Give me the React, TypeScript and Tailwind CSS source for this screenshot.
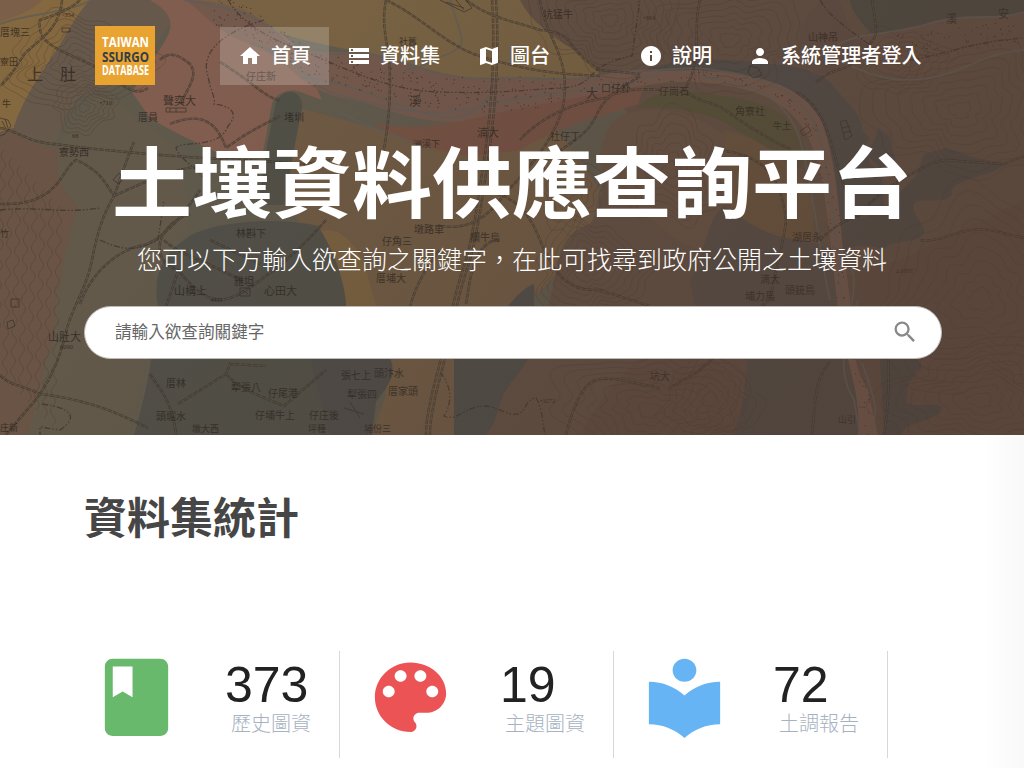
import React from "react";
import { MdHome, MdStorage, MdMap, MdInfo, MdPerson, MdSearch } from "react-icons/md";

type Pt = [number, number];

const REGIONS: { d: string; fill: string }[] = [
  // western hills and plain
  { d: "M0 0H90C72 20 66 38 50 60C36 82 24 98 14 128L0 132Z", fill: "#84683f" },
  { d: "M0 0H42C30 12 16 16 0 22Z", fill: "#7b5f49" },
  { d: "M90 0H180L172 22C160 34 158 46 146 58C128 70 130 84 110 88C80 90 70 104 62 124C56 140 60 146 40 142C24 140 16 132 14 126C24 98 36 82 50 60C66 38 72 20 90 0Z", fill: "#66594b" },
  { d: "M0 132L14 128C22 140 40 146 58 148C54 170 60 190 78 206C70 230 66 250 60 280C52 310 60 330 46 360C40 386 34 410 28 435H0Z", fill: "#695445" },
  { d: "M58 148C54 170 60 190 78 206C70 230 66 250 60 280C52 310 60 330 46 360L28 435H130C140 390 152 340 156 300C150 270 170 250 190 230L180 150L100 90Z", fill: "#62594a" },
  { d: "M150 0H200C240 8 270 22 300 50L322 100L300 92C290 88 276 92 272 104C268 124 266 140 262 156L216 152C196 142 172 132 150 118L132 92L158 52C170 34 182 18 150 0Z", fill: "#805d4e" },
  // yellow plain
  { d: "M195 0H620L640 80L500 84C440 88 410 60 350 50C300 40 260 30 195 0Z", fill: "#786243" },
  { d: "M300 108L380 130L560 134L600 190L585 250L530 300L500 360L458 435H372C380 410 392 388 384 372L350 300C346 280 342 256 330 240L298 222L288 150Z", fill: "#6e5a43" },
  { d: "M318 232C340 226 352 240 364 262L376 306H346C340 270 336 250 318 232Z", fill: "#78603f" },
  // middle hills
  { d: "M520 0H760L1024 0V435H480L500 382L546 310C560 280 550 236 590 224C610 200 590 160 640 130L600 76C590 50 540 40 520 0Z", fill: "#624f43" },
  { d: "M580 435C620 360 700 300 760 300L900 260L1024 200V435Z", fill: "#5f4b40" },
  { d: "M640 210C600 190 590 160 612 122C640 100 690 110 724 134C736 170 728 220 700 250C670 240 660 224 640 210Z", fill: "#655244" },
  { d: "M724 130C770 140 800 170 812 200C820 260 790 306 772 316C756 270 740 230 728 200Z", fill: "#69533d" },
  // slate lowlands
  { d: "M187 238C208 222 276 216 318 226C334 250 346 286 346 306V435H134C146 396 154 350 158 306C152 270 166 252 187 238Z", fill: "#504f47" },
  { d: "M276 102C284 86 304 90 302 108L292 160L284 205H260C260 180 268 140 276 102Z", fill: "#504f46" },
  { d: "M310 358H390C398 376 386 388 376 402L372 435H330Z", fill: "#4d4b47" },
  { d: "M505 310C516 296 524 288 534 284C536 310 530 340 528 358C520 376 504 386 500 404C496 420 490 430 486 435H454V358L470 318Z", fill: "#4e4c48" },
  { d: "M850 0H1024V16C990 22 960 10 926 38C900 42 886 36 874 36C860 22 852 12 850 0Z", fill: "#4d4a41" },
  { d: "M638 108C650 88 690 90 720 96C760 100 782 110 794 128C810 150 806 160 800 168C772 148 742 134 724 122C700 112 670 106 638 108Z", fill: "#565039" },
  { d: "M640 72C680 56 720 58 770 64C800 66 826 72 838 92C852 106 864 120 862 130L870 138L862 150L880 168L896 164L890 136L878 128C876 144 864 150 870 164L882 172L884 204L862 216L838 262C830 220 826 180 818 150C806 110 786 90 756 80C710 70 680 72 640 72Z", fill: "#504b47" },
  { d: "M884 208L916 176L924 154L946 148L976 158L1008 164L992 172C960 182 950 186 952 194C946 206 920 196 914 204C910 216 926 222 924 234C912 246 890 238 884 250C860 240 842 248 836 262L846 226Z", fill: "#504a44" },
  { d: "M690 280C710 240 706 220 724 206C744 220 768 238 800 240L838 250L836 310L850 358H744C720 362 700 340 690 280Z", fill: "#554c45" },
  { d: "M748 358H852L860 435H732L742 408Z", fill: "#514a44" },
  { d: "M880 358H916L922 366L908 384L906 402C916 410 936 400 942 408C940 420 916 420 906 428L900 435H884Z", fill: "#4c4743" },
  // riverbed
  { d: "M186 0C230 0 262 14 286 42C316 60 350 46 380 56C420 64 440 78 490 78C540 76 580 84 616 72L696 70C760 74 802 84 822 122C840 174 838 220 846 270C856 330 848 360 868 390L878 435H858C862 390 844 360 838 310C830 240 826 180 812 146C798 108 764 86 696 82C650 80 620 92 560 104C520 112 490 124 450 122C400 120 380 104 342 98C300 90 292 60 250 44C220 34 206 16 186 0Z", fill: "#73584c" },
  { d: "M374 124C410 130 450 126 500 112L596 94L644 86L638 104C606 116 562 124 520 150L470 156C430 150 396 140 374 124Z", fill: "#745143" },
  { d: "M838 44C870 30 900 34 934 22C976 12 990 22 1024 12V50C984 54 970 66 940 76C900 84 870 66 838 44Z", fill: "#654f44" },
  { d: "M814 72C790 40 800 20 822 0H838C850 18 846 38 870 46C850 60 840 76 814 72Z", fill: "#5e4b41" },
];

const STREAMS = [
  "M0 24C30 12 60 16 92 0M184 0C230 8 262 14 286 42C316 66 350 46 380 56C420 64 440 82 490 78C540 76 580 84 616 72",
  "M250 44C300 54 310 90 342 96C400 112 440 120 490 104C540 92 600 92 660 74M300 78C340 78 380 100 420 112S470 116 490 96",
  "M340 112C370 130 400 136 412 142M450 0C462 40 470 44 448 54C430 60 420 70 404 70",
  "M616 72L696 68C760 74 800 88 818 130C832 180 834 230 842 300C848 350 836 370 854 400L860 435",
  "M700 78C750 80 786 96 800 140C814 190 820 260 830 300",
  "M838 44C870 30 900 34 934 22C976 12 990 22 1024 12M838 60C880 80 900 84 940 76C974 66 984 54 1024 50",
  "M870 435C880 410 874 400 868 380S846 330 858 300M838 250C854 260 858 280 850 310",
];

const ROADS = [
  "M62 0C60 24 46 36 26 52C20 60 10 78 0 86",
  "M80 0C70 10 52 16 40 20C36 44 60 50 90 64S130 100 148 88",
  "M0 128C20 132 28 142 54 144C100 150 160 156 240 160S290 166 330 160",
  "M0 204C60 206 60 170 76 160C100 170 106 184 114 196C100 220 96 240 92 260C86 290 70 310 64 340C56 370 46 384 40 394",
  "M114 196C140 184 170 170 200 166M114 196C120 180 130 150 134 142",
  "M0 375C10 386 20 384 40 394C90 400 120 414 148 428",
  "M40 394C28 410 14 424 6 435M146 358C150 346 170 300 178 270C150 262 154 226 190 214",
  "M80 304C92 270 120 250 140 246S180 220 200 190M160 60C170 50 180 56 190 64C200 78 184 90 182 104",
  "M170 124C200 112 216 120 226 148C250 130 270 122 280 116M220 62C250 80 268 100 280 100",
  "M164 240C180 256 210 262 244 282M210 240L260 264M326 220C300 250 276 270 246 290S200 296 178 270",
  "M150 374C160 390 172 400 176 435M178 404L226 374L230 364L266 366M226 374C240 390 270 400 284 406L326 370",
  "M496 0C500 60 494 120 488 160S478 230 470 260C456 300 450 340 442 370S430 420 430 435",
  "M492 0C496 60 490 120 484 160S474 230 466 260C452 300 446 340 438 370S426 420 426 435",
  "M540 0C546 40 574 60 562 110C550 150 516 180 500 200S466 230 440 226",
  "M386 0C380 30 390 44 390 80S386 140 380 170",
  "M386 0C420 16 450 48 480 56C530 72 560 74 600 76M466 0C490 18 510 20 540 30C580 34 560 46 600 70L640 74",
  "M640 76C620 90 606 94 596 116S566 144 542 164M660 90C640 88 620 90 606 98C560 104 530 128 520 140",
  "M700 0C692 30 704 60 684 90C700 104 712 100 728 112S770 140 792 150",
  "M872 0C876 30 880 34 868 46M816 82C834 68 840 72 852 64",
  "M796 92C820 104 828 130 836 160S850 200 858 216C880 190 900 180 930 164L944 160L1004 164L1024 156",
  "M720 150C760 156 780 170 786 220C784 240 780 250 770 300M770 300C740 320 720 360 690 376L670 388",
  "M830 362C814 380 816 400 812 435M886 318C890 350 890 400 884 435",
  "M920 240C940 244 960 226 990 230L1024 238M820 240C840 220 860 214 884 206",
  "M470 180C500 200 520 190 540 240S580 290 600 290L650 306",
  "M410 308C414 288 430 260 440 250M466 304C470 280 474 240 500 240",
  "M566 435C572 410 582 384 596 380S630 382 660 388",
];

const RAIL = [
  "M228 0C240 20 262 36 300 50S380 90 440 92S520 90 560 88S580 66 632 56L640 0",
  "M264 20C210 36 202 60 208 76C210 90 216 98 214 104C230 106 240 112 228 126C220 150 180 140 176 148C180 160 196 166 210 186",
  "M820 0C830 18 850 30 874 48M910 60C940 56 970 42 1024 38",
  "M100 240C120 250 136 252 158 240L164 200M42 404C70 408 80 416 60 430L40 427V435",
  "M440 372C450 384 454 400 444 416C460 424 470 396 500 410S520 400 536 398C544 410 542 430 546 435",
  "M0 210C40 206 60 214 100 208",
];

const LABELS: [number, number, number, string][] = [
  [0, 36, 10, "厝塊三"], [27, 80, 16, "上"], [60, 80, 16, "肚"], [0, 65, 9, "寮田"], [2, 107, 9, "牛"],
  [246, 80, 10, "仔庄新"], [163, 105, 11, "聲奕大"], [138, 121, 10, "厝員"], [284, 121, 10, "堵圳"],
  [59, 156, 10, "寮勢西"], [399, 45, 9, "社舊"], [543, 18, 10, "坑猛牛"],
  [409, 106, 12, "溪"], [477, 137, 11, "湳大"], [413, 147, 9, "洲溪下"],
  [550, 140, 10, "社仔丁"], [586, 98, 12, "大"], [601, 92, 10, "口仔朴"], [659, 95, 10, "仔崗石"],
  [735, 115, 10, "角寮社"], [773, 129, 9, "牛土"], [808, 41, 10, "山神吊"], [946, 23, 11, "溪"],
  [998, 18, 11, "安"], [236, 237, 10, "林斟下"], [174, 295, 11, "山構上"],
  [264, 295, 11, "心田大"], [234, 285, 10, "雅坦"], [48, 341, 11, "山肚大"],
  [0, 237, 9, "竹"], [414, 233, 10, "墩路車"], [382, 245, 10, "仔角三"], [470, 241, 10, "欄牛烏"],
  [376, 282, 10, "厝埔大"], [166, 387, 10, "厝林"], [231, 391, 10, "犁張八"],
  [268, 397, 10, "仔尾港"], [156, 420, 10, "頭堀水"], [255, 419, 10, "仔埔牛上"], [309, 419, 10, "仔庄後"],
  [0, 431, 9, "庄新"], [341, 379, 10, "張七上"], [374, 377, 10, "頭汴水"], [347, 398, 10, "犁張四"],
  [388, 395, 10, "厝家頭"], [650, 380, 10, "坑大"], [792, 241, 10, "湖居永"], [760, 283, 10, "湳大"],
  [785, 294, 10, "頭銃鳥"], [745, 300, 10, "埔力馬"], [838, 423, 9, "山引"], [364, 432, 9, "埔份三"],
  [192, 432, 9, "墩大西"], [308, 432, 9, "坪種"],
];

const ELEVATIONS: [number, number, string][] = [
  [62, 17, "▫354"], [100, 105, "•710"], [643, 20, "•384"], [72, 138, "68"],
  [896, 273, "▵1857"], [540, 403, "•3272"], [60, 349, "6090"], [210, 302, "4491"],
];

const CENTERS: [number, number, number, number, number][] = [
  [78, 62, 8, 5, 9], [84, 108, 5, 4, 6], [610, 20, 8, 6, 9], [670, 170, 7, 8, 7], [590, 270, 7, 6, 8],
  [650, 410, 12, 7, 8], [960, 110, 11, 8, 8], [980, 300, 12, 11, 9], [900, 60, 8, 5, 6],
  [730, 40, 10, 7, 7], [980, 400, 12, 7, 8], [710, 400, 8, 7, 6], [570, 190, 6, 8, 5],
];

function contour(cx: number, cy: number, rx: number, ry: number, seed: number): string {
  const points: string[] = [];
  for (let i = 0; i <= 64; i++) {
    const t = (i / 64) * Math.PI * 2;
    const k = 1 + 0.14 * Math.sin(3 * t + seed) + 0.08 * Math.sin(7 * t + seed * 2) + 0.05 * Math.cos(11 * t + seed);
    points.push(`${(cx + rx * k * Math.cos(t)).toFixed(1)} ${(cy + ry * k * Math.sin(t)).toFixed(1)}`);
  }
  return `M${points.join("L")}Z`;
}

const CONTOURS = CENTERS.flatMap(([cx, cy, sx, sy, n], c) =>
  Array.from({ length: n }, (_, i) => contour(cx, cy, sx * (i + 1), sy * (i + 1), c * 1.7 + i * 0.12)),
);

const RIVER_LINE: Pt[] = [
  [215, 8], [265, 32], [310, 68], [370, 78], [430, 92], [490, 96], [560, 90], [630, 80], [700, 75],
  [770, 88], [808, 118], [826, 180], [836, 240], [846, 310], [860, 380], [868, 432],
];

function scatter(): Pt[] {
  const out: Pt[] = [];
  let s = 17;
  const rnd = () => {
    s = (s * 16807) % 2147483647;
    return s / 2147483647;
  };
  for (let i = 0; i < RIVER_LINE.length - 1; i++) {
    const [a, b] = [RIVER_LINE[i], RIVER_LINE[i + 1]];
    const wide = i < 6;
    for (let j = 0; j < (wide ? 42 : 14); j++) {
      const t = rnd();
      const vertical = i > 9;
      out.push([
        a[0] + (b[0] - a[0]) * t + (rnd() - 0.5) * (vertical ? 14 : 4),
        a[1] + (b[1] - a[1]) * t + (rnd() - 0.5) * (wide ? 34 : 10),
      ]);
    }
  }
  for (let j = 0; j < 70; j++) {
    const t = rnd();
    out.push([870 + t * 150, 50 - t * 18 + (rnd() - 0.5) * 24]);
  }
  return out;
}
const SAND = scatter();

const WAVES = Array.from({ length: 8 }, (_, i) => {
  let d = `M${4 + i * 8} ${150 + i * 8}`;
  for (let y = 0; y < 22; y++) d += `q${y % 2 ? 5 : -5} 5 ${y % 3 === 0 ? -1 : 0} 10`;
  return d;
});

function HistoricMap() {
  return (
    <svg className="absolute inset-0 h-full w-full" viewBox="0 0 1024 435" preserveAspectRatio="none" aria-hidden="true">
      <defs>
        <linearGradient id="shade" x1="0" y1="0" x2="1" y2="0.35">
          <stop offset="0.3" stopColor="#503d33" stopOpacity="0" />
          <stop offset="1" stopColor="#503d33" stopOpacity="0.4" />
        </linearGradient>
      </defs>
      <rect width="1024" height="435" fill="#5f594c" />
      {REGIONS.map((r, i) => (
        <path key={i} d={r.d} fill={r.fill} />
      ))}
      <g fill="none" stroke="#493229" strokeWidth="0.8" opacity="0.36">
        {CONTOURS.map((d, i) => (
          <path key={i} d={d} />
        ))}
        {WAVES.map((d, i) => (
          <path key={i} d={d} />
        ))}
      </g>
      <g fill="none" stroke="#605e57" strokeWidth="1.8" opacity="0.8">
        {STREAMS.map((d, i) => (
          <path key={i} d={d} />
        ))}
      </g>
      <g fill="#32261f" opacity="0.75">
        {SAND.map(([x, y], i) => (
          <circle key={i} cx={x} cy={y} r="0.6" />
        ))}
      </g>
      <g fill="none" stroke="#332c26" opacity="0.62">
        {ROADS.map((d, i) => (
          <g key={i}>
            <path d={d} strokeWidth="2.4" strokeDasharray="5 1" />
            <path d={d} strokeWidth="0.9" stroke="#625345" />
          </g>
        ))}
        {RAIL.map((d, i) => (
          <path key={i} d={d} strokeWidth="1.3" strokeDasharray="6 2 1.5 2 1.5 2" />
        ))}
      </g>
      <g fill="none" stroke="#342d27" strokeWidth="0.9" opacity="0.7">
        <path d="M0 118l8 2 3 6-6 8-5 2M2 121l4 8M5 119l3 9M440 0l24 12 8-4-6-8M446 2l18 6M456 0l8 10M840 122l6-2 6 16-7 4zM842 128l8-2M843 133l8-2M344 408l20 6M350 402l10 16M113 180l6-7 5 4-5 7zM800 131l8-5 3 5-8 5zM11 299h8v8h-8zM7 322l6-2 2 6-7 3z" />
        <path d="M750 66l8 2 4 7-9 3-5-5zM62 28h8v4h-8zM166 108h20v4h-20zM170 108v4M176 108v4M240 288h10v8h-10zM242 290l6 4" />
      </g>
      <g fill="#2c2520" opacity="0.78" className="font-['Liberation_Serif','Noto_Sans_CJK_TC',serif]">
        {LABELS.map(([x, y, size, t], i) => (
          <text key={i} x={x} y={y} fontSize={size}>
            {t}
          </text>
        ))}
        {ELEVATIONS.map(([x, y, t], i) => (
          <text key={i} x={x} y={y} fontSize="6.5">
            {t}
          </text>
        ))}
      </g>
      <rect width="1024" height="435" fill="url(#shade)" />
    </svg>
  );
}

function Logo() {
  return (
    <svg className="h-[59px] w-[60px] shrink-0 bg-[#e8a331] font-['Open_Sans',sans-serif] font-bold" viewBox="0 0 60 59" aria-label="Taiwan SSURGO Database">
      <text x="7" y="20.7" fontSize="15" fill="#fff" textLength="47" lengthAdjust="spacingAndGlyphs">TAIWAN</text>
      <text x="7" y="35.6" fontSize="14" fill="#333c49" textLength="47" lengthAdjust="spacingAndGlyphs">SSURGO</text>
      <text x="7" y="48.8" fontSize="13.3" fill="#fff" textLength="47" lengthAdjust="spacingAndGlyphs">DATABASE</text>
    </svg>
  );
}

function NavItem({ icon, label, className }: { icon: React.ReactNode; label: string; className: string }) {
  return (
    <a className={`flex h-[58px] items-center text-[20.1px] font-medium text-white ${className}`}>
      {icon}
      <span className="ml-[9px] -mt-px leading-none whitespace-nowrap">{label}</span>
    </a>
  );
}

const STATS = [
  {
    count: "373",
    label: "歷史圖資",
    color: "text-[#69b96c]",
    num: "-ml-[6px]",
    path: "M18 2H6c-1.1 0-2 .9-2 2v16c0 1.1.9 2 2 2h12c1.1 0 2-.9 2-2V4c0-1.1-.9-2-2-2zM6 4h5v8l-2.5-1.5L6 12V4z",
  },
  {
    count: "19",
    label: "主題圖資",
    color: "text-[#ec5355]",
    num: "-ml-[5px]",
    path: "M12 3c-4.97 0-9 4.03-9 9s4.03 9 9 9c.83 0 1.5-.67 1.5-1.5 0-.39-.15-.74-.39-1.01-.23-.26-.38-.61-.38-.99 0-.83.67-1.5 1.5-1.5H16c2.76 0 5-2.24 5-5 0-4.42-4.03-8-9-8zm-5.5 9c-.83 0-1.5-.67-1.5-1.5S5.67 9 6.5 9 8 9.67 8 10.5 7.33 12 6.5 12zm3-4C8.67 8 8 7.33 8 6.5S8.67 5 9.5 5s1.5.67 1.5 1.5S10.33 8 9.5 8zm5 0c-.83 0-1.5-.67-1.5-1.5S13.67 5 14.5 5s1.5.67 1.5 1.5S15.33 8 14.5 8zm3 4c-.83 0-1.5-.67-1.5-1.5S16.67 9 17.5 9s1.5.67 1.5 1.5-.67 1.5-1.5 1.5z",
  },
  {
    count: "72",
    label: "土調報告",
    color: "text-[#66b4f4]",
    num: "-ml-[6px]",
    path: "M12 11.55C9.64 9.35 6.48 8 3 8v11c3.48 0 6.64 1.35 9 3.55 2.36-2.19 5.52-3.55 9-3.55V8c-3.48 0-6.64 1.35-9 3.55zM12 8c1.66 0 3-1.34 3-3s-1.34-3-3-3-3 1.34-3 3 1.34 3 3 3z",
  },
];

export default function App() {
  return (
    <div className="h-[768px] w-[1024px] overflow-hidden bg-white font-['Noto_Sans_CJK_TC',sans-serif]">
      <header className="relative h-[435px] overflow-hidden">
        <HistoricMap />
        <div className="relative">
          <nav className="flex h-[85px] items-start pt-[26px] pl-[95px]">
            <Logo />
            <div className="ml-[65px] flex pt-px">
              <NavItem className="w-[109px] bg-white/20 pl-[18px]" icon={<MdHome size={24} />} label="首頁" />
              <NavItem className="w-[130px] pl-[18px]" icon={<MdStorage size={24} />} label="資料集" />
              <NavItem className="w-[179px] pl-[18px]" icon={<MdMap size={24} />} label="圖台" />
              <NavItem className="w-[110px] pl-px" icon={<MdInfo size={24} />} label="說明" />
              <NavItem className="" icon={<MdPerson size={24} />} label="系統管理者登入" />
            </div>
          </nav>
          <h1 className="mt-[43px] origin-center scale-y-[0.97] text-center text-[80px] leading-[100px] font-bold text-white">土壤資料供應查詢平台</h1>
          <p className="mt-3 text-center text-[25px] leading-9 font-light text-white">您可以下方輸入欲查詢之關鍵字，在此可找尋到政府公開之土壤資料</p>
          <form className="mt-[30px] ml-[84px] flex h-[53px] w-[858px] items-center justify-between rounded-full border border-[#bdbab7] bg-white pr-[22px] pb-0.5 pl-[30px]">
            <span className="text-[16.6px] text-[#666]">請輸入欲查詢關鍵字</span>
            <MdSearch size={28} className="text-[#888]" />
          </form>
        </div>
      </header>
      <main className="flex">
        <div className="w-[980px]">
          <h2 className="mt-[49px] ml-[84px] text-[43px] leading-[62px] font-bold text-[#464646]">資料集統計</h2>
          <section className="mt-[105px] ml-[66px] flex">
            {STATS.map((s) => (
              <div key={s.label} className="flex h-[107px] w-[274px] border-r border-[#d8d8d8] pl-[22.5px]">
                <svg className={`h-[92.6px] w-[95px] shrink-0 ${s.color}`} viewBox="0 0 24 24" preserveAspectRatio="none" fill="currentColor">
                  <path d={s.path} />
                </svg>
                <div className="ml-[47.5px] pt-[9px]">
                  <div className={`font-['Liberation_Sans',sans-serif] text-[50px] leading-[50px] text-[#222] ${s.num}`}>{s.count}</div>
                  <div className="text-xl leading-[26px] font-light whitespace-nowrap text-[#a6b2bf]">{s.label}</div>
                </div>
              </div>
            ))}
          </section>
        </div>
        <div className="h-[333px] w-11 bg-linear-to-r from-white to-[#f9f9f9]" />
      </main>
    </div>
  );
}
